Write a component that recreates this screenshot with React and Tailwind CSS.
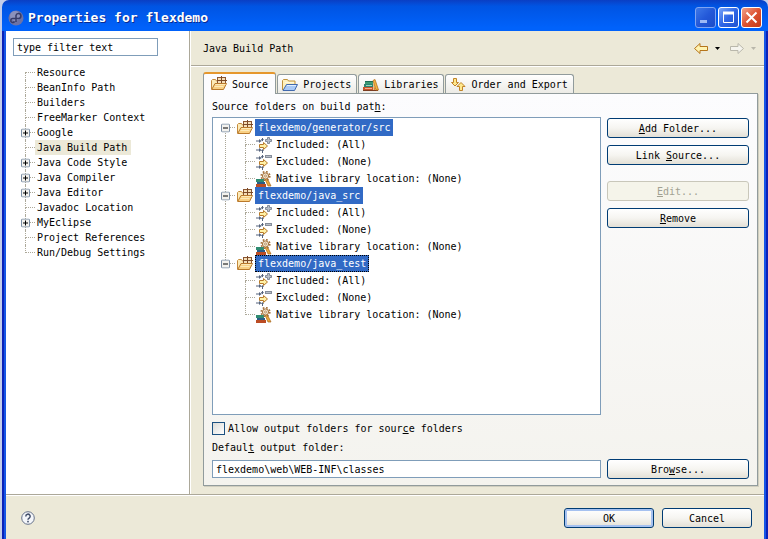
import React from "react";

const pages = [
  { name: "Resource" },
  { name: "BeanInfo Path" },
  { name: "Builders" },
  { name: "FreeMarker Context" },
  { name: "Google", children: true },
  { name: "Java Build Path", selected: true },
  { name: "Java Code Style", children: true },
  { name: "Java Compiler", children: true },
  { name: "Java Editor", children: true },
  { name: "Javadoc Location" },
  { name: "MyEclipse", children: true },
  { name: "Project References" },
  { name: "Run/Debug Settings" },
];

const folders = ["flexdemo/generator/src", "flexdemo/java_src", "flexdemo/java_test"];

function PackageFolderIcon() {
  return (
    <svg className="size-4 shrink-0" viewBox="0 0 16 16" aria-hidden="true">
      <path d="M.5 13V4.500l1-1h3l1 1.500h6V13z" fill="#fdebb8" stroke="#c48a3c" />
      <rect x="6.500" y="1.500" width="8" height="7" fill="#f6dfb8" stroke="#8a5530" />
      <path d="M10.500 0v8M6 4.500h10" stroke="#7d4a26" fill="none" />
      <path d="M.7 13.500L4 7.500h11.500l-3 6z" fill="#f9d084" stroke="#b9792c" />
      <path d="M4.500 8.500h10M3.500 10.500h9" stroke="#fdeab9" />
    </svg>
  );
}

function ProjectFolderIcon() {
  return (
    <svg className="size-4 shrink-0" viewBox="0 0 16 16" aria-hidden="true">
      <path d="M.5 13V3.500l1-1h4l1 1.500h6.500V8" fill="#fdf0bd" stroke="#c0923c" />
      <path d="M3 5.500h9" stroke="#fff8dc" />
      <path d="M1 13.500L4.500 7.500h11l-3 6z" fill="#a9c9f5" stroke="#4169ad" />
      <path d="M5 8.500h9" stroke="#e0eeff" />
    </svg>
  );
}

function BooksIcon() {
  return (
    <svg className="size-4 shrink-0" viewBox="0 0 16 16" aria-hidden="true">
      <rect x="2" y="4" width="8" height="3" fill="#3c9a74" />
      <path d="M2 4.500h8" stroke="#1d6b55" />
      <rect x="1" y="7" width="9" height="3" fill="#2d8470" />
      <path d="M3 8.500h6" stroke="#9bd3bb" />
      <rect x="0" y="10" width="10" height="4" fill="#c9542b" />
      <path d="M2 11.500h7" stroke="#f3b18d" />
      <path d="M0 13.500h15" stroke="#7b3c20" />
      <path d="M10 3.500l2-1L15.500 13h-2.500z" fill="#f4b63f" stroke="#b8701c" strokeWidth=".8" />
      <path d="M10.500 6v7h2z" fill="#dc8d2c" />
    </svg>
  );
}

function OrderIcon() {
  return (
    <svg className="size-4 shrink-0" viewBox="0 0 16 16" aria-hidden="true">
      <path d="M3.500 1.500h3v4h2L5 9 1.500 5.500h2z" fill="#ffe88c" stroke="#c08428" />
      <path d="M9.500 13.500h3v-4h2.500L11 5.500 7 9.500h2.500z" fill="#ffe88c" stroke="#c08428" />
    </svg>
  );
}

function FilterIcon({ exclude }) {
  return (
    <svg className="size-4 shrink-0" viewBox="0 0 16 16" aria-hidden="true">
      <path d="M0 4h4M0 13h4M6.500 1v3M6.500 13v3" stroke="#55637c" fill="none" />
      <path d="M3 2l2.500 2L3 6zM3 11l2.500 2L3 15zM8 2l-2 2.500L5 2zM5 14l1.500-2L8 14z" fill="#55637c" />
      <path d="M3.500 7.500h4V5.500l4 3.500-4 3.500v-2h-4z" fill="#fff1a6" stroke="#b77a2a" />
      {exclude ? (
        <rect x="9.500" y="1.500" width="6" height="2" fill="#b9bfc9" stroke="#858d9a" />
      ) : (
        <path d="M11.500.5h2v2h2v2h-2v2h-2v-2h-2v-2h2z" fill="#b9bfc9" stroke="#858d9a" />
      )}
    </svg>
  );
}

function NativeIcon() {
  return (
    <svg className="size-4 shrink-0" viewBox="0 0 16 16" aria-hidden="true">
      <rect x="0" y="8" width="8" height="3" fill="#2f8c72" />
      <rect x="1" y="11" width="8" height="2" fill="#2b5c86" />
      <rect x="0" y="13" width="10" height="3" fill="#bb4c24" />
      <path d="M9 8l2-1 4 8h-3z" fill="#eba83a" stroke="#a5641c" strokeWidth=".7" />
      <circle cx="9.500" cy="5" r="4.300" fill="none" stroke="#a5713a" strokeWidth="1.600" strokeDasharray="1.700 1.680" />
      <circle cx="9.500" cy="5" r="3.100" fill="#f1e3cd" stroke="#a5713a" />
      <circle cx="9.500" cy="5" r="1" fill="#fff" stroke="#a5713a" strokeWidth=".7" />
    </svg>
  );
}

function Toggle({ open, label }) {
  return (
    <button
      type="button"
      aria-label={label}
      aria-expanded={open}
      className="absolute top-1/2 -left-1 size-[9px] -translate-y-1/2"
    >
      <svg className="block size-[9px]" viewBox="0 0 9 9">
        <rect x=".5" y=".5" width="8" height="8" rx="1" fill="#f3f2ee" stroke="#7b8ea5" />
        <path d={open ? "M2 4.500h5" : "M2 4.500h5M4.500 2v5"} stroke="#000" />
      </svg>
    </button>
  );
}

function Branch({ first, last, children }) {
  return (
    <div className="relative flex w-[10px] shrink-0 flex-col self-stretch">
      <div className={`flex-1 border-b border-dotted border-[#aca899] ${first ? "" : "border-l"}`} />
      <div className={`flex-1 border-dotted border-[#aca899] ${last ? "" : "border-l"}`} />
      {children}
    </div>
  );
}

function PageTree() {
  return (
    <ul className="mt-[9px] pl-3">
      {pages.map((p, i) => (
        <li key={p.name} className="flex h-[15px] items-center">
          <Branch first={i === 0} last={i === pages.length - 1}>
            {p.children && <Toggle open={false} label={"Expand " + p.name} />}
          </Branch>
          <span className={`h-[15px] pr-1 pl-[2px] whitespace-nowrap ${p.selected ? "bg-[#ece9d8]" : ""}`}>
            {p.name}
          </span>
        </li>
      ))}
    </ul>
  );
}

function FolderTree() {
  const details = [
    { text: "Included: (All)", icon: <FilterIcon /> },
    { text: "Excluded: (None)", icon: <FilterIcon exclude /> },
    { text: "Native library location: (None)", icon: <NativeIcon /> },
  ];
  return (
    <ul className="h-full overflow-auto border border-[#7f9db9] bg-white pt-px pl-3">
      {folders.map((f, i) => {
        const last = i === folders.length - 1;
        return (
          <li key={f}>
            <div className="flex h-[17px] items-center">
              <Branch first={i === 0} last={last}>
                <Toggle open label={"Collapse " + f} />
              </Branch>
              <span className="ml-[2px] flex">
                <PackageFolderIcon />
              </span>
              <span
                className={`ml-[2px] h-[17px] border bg-[#316ac5] px-[2px] leading-[15px] text-white ${
                  last ? "border-dotted border-black" : "border-[#316ac5]"
                }`}
              >
                {f}
              </span>
            </div>
            <ul className={last ? "ml-px" : "border-l border-dotted border-[#aca899]"}>
              {details.map((d, j) => (
                <li key={d.text} className="flex h-[17px] items-center pl-[19px]">
                  <Branch last={j === 2} />
                  <span className="ml-px flex">{d.icon}</span>
                  <span className="ml-1 whitespace-pre">{d.text}</span>
                </li>
              ))}
            </ul>
          </li>
        );
      })}
    </ul>
  );
}

function XpButton({ children, disabled, focused, className = "" }) {
  const tone = disabled
    ? "border-[#c9c7ba] bg-[#f5f4ea] text-[#a1a192]"
    : "border-[#003c74] bg-linear-to-b from-white via-[#f6f5f1] to-[#e3e0d6] text-black";
  const ring = focused ? "shadow-[inset_0_0_0_2px_#a5c1f0]" : "";
  return (
    <button
      type="button"
      disabled={disabled}
      className={`h-5 rounded-[3px] border text-center leading-[17px] ${tone} ${ring} ${className}`}
    >
      {children}
    </button>
  );
}

function Tab({ icon, children, active }) {
  return (
    <button
      type="button"
      role="tab"
      aria-selected={!!active}
      className={
        active
          ? "-mb-px flex h-[22px] items-center gap-[5px] rounded-t-[3px] border border-t-2 border-b-0 border-[#919b9c] border-t-[#e5972d] bg-[#fcfcfe] px-[7px]"
          : "ml-px flex h-[19px] items-center gap-[5px] rounded-t-[3px] border border-b-0 border-[#919b9c] bg-linear-to-b from-white to-[#ecebe6] pt-px pr-[5px] pl-1"
      }
    >
      {icon}
      <span className="whitespace-nowrap">{children}</span>
    </button>
  );
}

function CaptionButton({ label, red, dim, children }) {
  const fill = red
    ? "from-[#f0a08a] via-[#dd5231] to-[#c43a18] border-white"
    : dim
      ? "from-[#3f78e8] via-[#2358d8] to-[#1c4cc8] border-[#7fa4f2]"
      : "from-[#7ba4f8] via-[#2f66e6] to-[#2052d0] border-white";
  return (
    <button type="button" aria-label={label} className={`size-[21px] rounded-[3px] border bg-linear-to-br ${fill}`}>
      <svg className="block size-[19px]" viewBox="0 0 19 19" fill="none" stroke="#fff">
        {children}
      </svg>
    </button>
  );
}

function TitleBar() {
  return (
    <header className="flex h-[31px] shrink-0 items-center rounded-t-[7px] bg-linear-to-b from-[#0a3fc4] from-0% via-[#0054e3] via-20% to-[#0062fb] to-90% pt-1 pr-[6px] pl-[6px]">
      <svg className="size-4" viewBox="0 0 16 16" aria-hidden="true">
        <circle cx="8" cy="8" r="7.500" fill="#6d73a6" />
        <circle cx="7" cy="6" r="5" fill="#8b91bb" />
        <path d="M8 12V5.500a2.500 2.500 0 1 1 2.500 3H5a2 2 0 1 0 1.500 3" fill="none" stroke="#373c68" strokeWidth="1.500" />
      </svg>
      <h1 className="ml-1 flex-1 text-[13px] leading-4 font-bold whitespace-nowrap text-white [text-shadow:1px_1px_0_#0a2a90]">
        Properties for flexdemo
      </h1>
      <div className="flex gap-[2px]">
        <CaptionButton label="Minimize" dim>
          <path d="M4 13.500h7" stroke="#9db9f5" strokeWidth="3" />
        </CaptionButton>
        <CaptionButton label="Maximize">
          <path d="M4.500 4v10.500h10V4" />
          <path d="M4 5h11" strokeWidth="3" />
        </CaptionButton>
        <CaptionButton label="Close" red>
          <path d="M4.500 4.500l10 10M14.500 4.500l-10 10" strokeWidth="2" />
        </CaptionButton>
      </div>
    </header>
  );
}

function NavArrow({ back }) {
  return (
    <button type="button" aria-label={back ? "Back" : "Forward"} disabled={!back} className="flex items-center gap-[6px]">
      <svg className="h-[13px] w-4" viewBox="0 0 16 13">
        {back ? (
          <path d="M1.500 6.500l5.500-5v3h7.500v4H7v3z" fill="#fff3b0" stroke="#b5751c" />
        ) : (
          <path d="M14.500 6.500L9 1.500v3H1.500v4H9v3z" fill="#f5f4ee" stroke="#b9b7ab" />
        )}
      </svg>
      <svg className="h-[3px] w-[5px]" viewBox="0 0 5 3">
        <path d="M0 0h5L2.500 3z" fill={back ? "#000" : "#b9b7ab"} />
      </svg>
    </button>
  );
}

export default function App() {
  return (
    <div className="flex h-screen flex-col overflow-hidden bg-[#c3cdea] pl-[2px] font-['DejaVu_Sans_Mono','Liberation_Mono',monospace] text-[10px] leading-[15px] text-black">
      <TitleBar />
      <div className="flex min-h-0 flex-1 flex-col border-x-2 border-[#0a22b8]">
        <div className="flex min-h-0 flex-1 flex-col border-x-2 border-[#1556e6] bg-[#ece9d8]">
          <div className="flex min-h-0 flex-1">
            <aside className="w-[184px] shrink-0 border-r border-[#aca899] bg-white pt-[7px] pl-[7px]">
              <input
                aria-label="Filter"
                defaultValue="type filter text"
                className="block h-[18px] w-[145px] border border-[#7f9db9] bg-white px-[3px] outline-none"
              />
              <PageTree />
            </aside>
            <main className="flex min-w-0 flex-1 flex-col border-l border-white">
              <div className="flex h-[35px] shrink-0 items-center justify-between border-b border-[#aca899] pr-[8px] pl-3">
                <h2>Java Build Path</h2>
                <div className="flex gap-[9px]">
                  <NavArrow back />
                  <NavArrow />
                </div>
              </div>
              <div className="flex min-h-0 flex-1 flex-col border-t border-white pt-[5px] pr-[6px] pb-2 pl-3">
                <div role="tablist" className="z-10 flex items-end">
                  <Tab active icon={<PackageFolderIcon />}>Source</Tab>
                  <Tab icon={<ProjectFolderIcon />}>Projects</Tab>
                  <Tab icon={<BooksIcon />}>Libraries</Tab>
                  <Tab icon={<OrderIcon />}>Order and Export</Tab>
                </div>
                <section className="flex min-h-0 flex-1 flex-col border border-[#919b9c] bg-linear-to-b from-[#fcfcfe] to-[#f4f3ee] px-2 pt-[5px] pb-[6px] shadow-[1px_1px_0_#d0cebf]">
                  <div className="mb-[3px]">
                    Source folders on build pat<u>h</u>:
                  </div>
                  <div className="flex min-h-0 flex-1 gap-[6px]">
                    <div className="min-w-0 flex-1">
                      <FolderTree />
                    </div>
                    <div className="flex w-[142px] shrink-0 flex-col gap-[7px] pt-px">
                      <XpButton><u>A</u>dd Folder...</XpButton>
                      <XpButton>Link <u>S</u>ource...</XpButton>
                      <XpButton disabled className="mt-[9px]"><u>E</u>dit...</XpButton>
                      <XpButton><u>R</u>emove</XpButton>
                    </div>
                  </div>
                  <label className="mt-[6px] flex items-center gap-[3px]">
                    <input
                      type="checkbox"
                      className="size-[13px] appearance-none border border-[#1c5180] bg-linear-to-br from-[#dcdcd7] to-white"
                    />
                    <span>
                      Allow output folders for sour<u>c</u>e folders
                    </span>
                  </label>
                  <label htmlFor="output" className="mt-1 mb-1">
                    Defaul<u>t</u> output folder:
                  </label>
                  <div className="flex items-center gap-[6px]">
                    <input
                      id="output"
                      defaultValue="flexdemo\web\WEB-INF\classes"
                      className="h-[18px] min-w-0 flex-1 border border-[#7f9db9] bg-white px-[3px] outline-none"
                    />
                    <XpButton className="w-[142px]">Bro<u>w</u>se...</XpButton>
                  </div>
                </section>
              </div>
            </main>
          </div>
          <footer className="flex h-[45px] shrink-0 items-center border-t border-[#aca899] pt-[2px] pr-3 pl-[15px] shadow-[inset_0_1px_0_#fff]">
            <button type="button" aria-label="Help">
              <svg className="block size-[14px]" viewBox="0 0 14 14" fill="none">
                <circle cx="7" cy="7" r="6.300" fill="#f4f6fa" stroke="#66728a" />
                <path d="M4.800 5.500a2.200 2.200 0 1 1 3.400 1.700c-.8.500-1.200.8-1.200 1.600" stroke="#44506b" strokeWidth="1.500" />
                <rect x="6.200" y="9.800" width="1.600" height="1.600" fill="#44506b" />
              </svg>
            </button>
            <div className="ml-auto flex gap-2">
              <XpButton focused className="w-[90px]">OK</XpButton>
              <XpButton className="w-[90px]">Cancel</XpButton>
            </div>
          </footer>
        </div>
      </div>
    </div>
  );
}
